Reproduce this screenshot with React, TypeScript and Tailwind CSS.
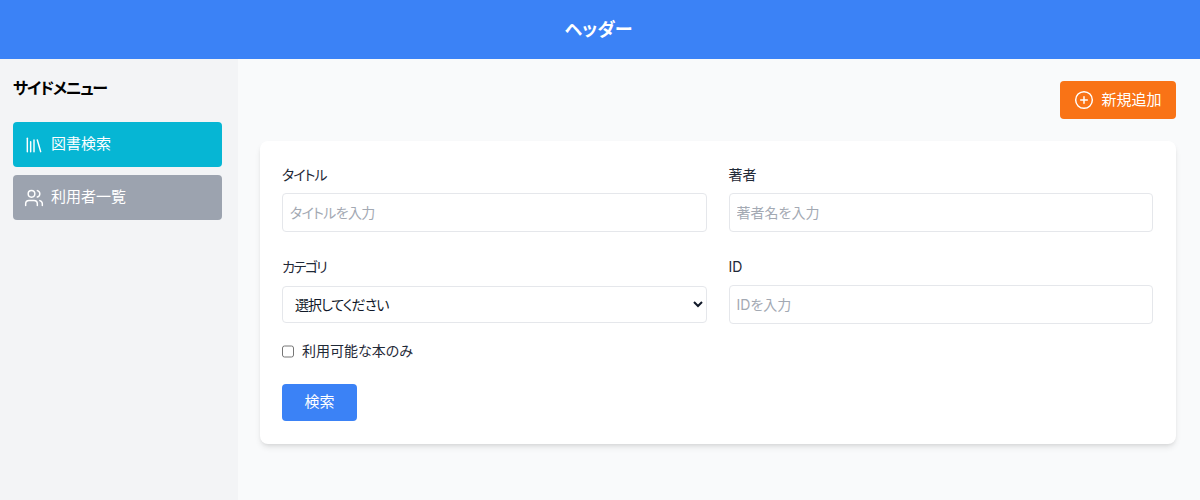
import { CirclePlus, Library, Users } from "lucide-react"

const font = "font-['Inter','Noto_Sans_CJK_JP',sans-serif] [font-feature-settings:'palt']"

const inputClass =
  "w-full h-[39px] rounded border border-[#e5e7eb] bg-white px-[7px] text-sm text-gray-900 placeholder:text-[#a3a9b3]"

function Field({ label, placeholder, labelClass = "" }: { label: string; placeholder: string; labelClass?: string }) {
  return (
    <div className="flex flex-col">
      <label className={`mb-2 text-sm leading-[20px] text-[#1f2937] ${labelClass}`}>{label}</label>
      <input className={`${inputClass} ${label === "タイトル" ? "placeholder:tracking-[-0.7px]" : ""}`} placeholder={placeholder} />
    </div>
  )
}

export default function App() {
  return (
    <div className={`${font} flex h-[500px] w-[1200px] flex-col overflow-hidden bg-[#f9fafb]`}>
      {/* Header */}
      <header className="flex h-[59px] items-center justify-center bg-[#3b82f6] pr-[3px]">
        <h1 className="text-lg font-bold text-white">ヘッダー</h1>
      </header>

      <div className="flex flex-1">
        {/* Sidebar */}
        <aside className="w-[238px] bg-[#f3f4f6] px-[13px] pt-[17px]">
          <h2 className="mb-[22px] text-base leading-[24px] font-bold tracking-[-1.3px] text-black">サイドメニュー</h2>
          <nav className="flex flex-col gap-2">
            <a className="flex h-[45px] w-[209px] items-center gap-[7px] rounded bg-[#06b6d4] pr-3 pl-[11px] text-[15px] text-white">
              <Library className="h-5 w-5" strokeWidth={1.75} />
              図書検索
            </a>
            <a className="flex h-[45px] w-[209px] items-center gap-[7px] rounded bg-[#9ca3af] pr-3 pl-[11px] text-[15px] text-white">
              <Users className="h-5 w-5" strokeWidth={1.75} />
              利用者一覧
            </a>
          </nav>
        </aside>

        {/* Main */}
        <main className="flex-1 pt-[22px] pr-[24px] pl-[22px]">
          <div className="mb-[22px] flex justify-end">
            <button className="flex h-[38px] w-[116px] items-center justify-center gap-[7px] rounded bg-[#f97316] text-[15px] text-white">
              <CirclePlus className="h-5 w-5" strokeWidth={1.75} />
              新規追加
            </button>
          </div>

          <section className="h-[303px] rounded-lg bg-white pt-[24px] pr-[23px] pl-[22px] shadow-md">
            <div className="grid grid-cols-2 gap-x-[22px] gap-y-[25px]">
              <Field label="タイトル" placeholder="タイトルを入力" labelClass="tracking-[-1px]" />
              <Field label="著者" placeholder="著者名を入力" />
              <div className="flex flex-col">
                <label className="mb-[9px] text-sm leading-[20px] tracking-[-1.5px] text-[#1f2937]">カテゴリ</label>
                <select className="h-[37px] w-full rounded border border-[#e5e7eb] bg-white px-2 text-sm tracking-[-1px] text-gray-900">
                  <option>選択してください</option>
                </select>
              </div>
              <Field label="ID" placeholder="IDを入力" />
            </div>

            <label className="mt-[17px] flex items-center gap-2 text-sm leading-[20px] text-[#1f2937]">
              <input type="checkbox" className="h-[13px] w-[12px]" />
              利用可能な本のみ
            </label>

            <button className="mt-[23px] h-[37px] w-[75px] rounded bg-[#3b82f6] text-[15px] text-white">検索</button>
          </section>
        </main>
      </div>
    </div>
  )
}
